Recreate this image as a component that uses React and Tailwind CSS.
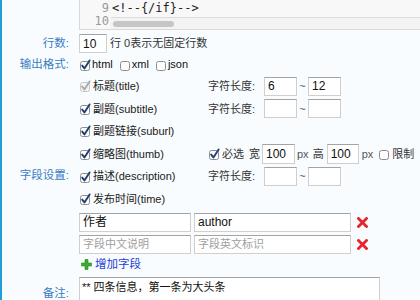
import React from 'react';

const FONT = { fontFamily: '"Liberation Sans", "Noto Sans CJK SC", sans-serif' };

function Cb({ checked = false, disabled = false }) {
  return (
    <svg width="12" height="12" viewBox="0 0 12 12" className="shrink-0">
      <rect x="1.5" y="2.5" width="9" height="9" rx="2" fill={disabled ? '#f4f4f4' : '#fdfdfd'} stroke={disabled ? '#c6c6c6' : '#8d8d8d'} />
      {checked && (
        <path
          d="M3.2 6.6 L5.4 9.4 L10.6 1.4"
          fill="none"
          stroke={disabled ? '#a9a9a9' : '#1f3f73'}
          strokeWidth="1.9"
          strokeLinecap="round"
          strokeLinejoin="round"
        />
      )}
    </svg>
  );
}

function Input({ w, value, placeholder, h = 'h-[19px]' }) {
  return (
    <div
      className={`${h} shrink-0 border border-[#cfcfcf] border-t-[#a3a3a3] bg-white px-[3px] flex items-center text-[12px] text-[#111] overflow-hidden whitespace-nowrap`}
      style={{ width: w }}
    >
      {value ? value : <span className="text-[11px] text-[#a0a0a0]">{placeholder}</span>}
    </div>
  );
}

function Del() {
  return (
    <svg width="11" height="11" viewBox="0 0 11 11" className="shrink-0">
      <path d="M1.5 1.5 L9.5 9.5 M9.5 1.5 L1.5 9.5" stroke="#e8232b" strokeWidth="2.8" strokeLinecap="square" />
    </svg>
  );
}

function Plus() {
  return (
    <svg width="11" height="11" viewBox="0 0 11 11" className="shrink-0">
      <path d="M4 0.5 H7 V4 H10.5 V7 H7 V10.5 H4 V7 H0.5 V4 H4 Z" fill="#3caa2e" stroke="#2a8a20" strokeWidth="0.6" />
    </svg>
  );
}

function Label({ children }) {
  return <div className="text-right pr-[10px] text-[11.5px] text-[#3a7dc4]">{children}</div>;
}

function Len({ vals }) {
  return (
    <div className="flex items-center">
      <span className="w-[56px] text-[11px] text-[#333]">字符长度:</span>
      <Input w={33} value={vals[0]} />
      <span className="w-[11px] text-center text-[11px] text-[#555]">~</span>
      <Input w={33} value={vals[1]} />
    </div>
  );
}

const FIELDS = [
  { cn: '标题', en: '(title)', disabled: true, len: ['6', '12'] },
  { cn: '副题', en: '(subtitle)', len: ['', ''] },
  { cn: '副题链接', en: '(suburl)' },
  { cn: '缩略图', en: '(thumb)', thumb: true },
  { cn: '描述', en: '(description)', len: ['', ''] },
  { cn: '发布时间', en: '(time)' },
];

export default function App() {
  return (
    <div className="min-h-[300px] border-l-[2px] border-[#1f9fd5] bg-[#f8fcfe] text-[#222]" style={FONT}>
      <div className="grid grid-cols-[77px_1fr]">
        <div />
        <div className="flex h-[30px] border-l border-b border-[#d9d9d9] bg-[#f8f8f8] overflow-hidden" style={{ fontFamily: '"DejaVu Sans Mono", monospace' }}>
          <div className="w-[31px] shrink-0 pt-[2px] pr-[2px] text-right text-[12px] leading-[13px] text-[#9a9a9a]">
            <div>9</div>
            <div>10</div>
          </div>
          <div className="flex-1 pt-[2px] flex flex-col">
            <div className="text-[12px] leading-[13px] text-[#222] pl-[1px]">{'<!--{/if}-->'}</div>
            <div className="mt-[2px] h-[12px] border-t border-[#dcdcdc] bg-[#f3f3f3] flex items-center">
              <div className="ml-[2px] h-[6px] w-[61px] rounded-full bg-[#c6c6c6]" />
            </div>
          </div>
        </div>
      </div>

      <div className="grid grid-cols-[77px_1fr] items-center mt-[4px] h-[19px]">
        <Label>行数:</Label>
        <div className="flex items-center">
          <Input w={28} value="10" />
          <span className="ml-[3px] text-[11px] text-[#333]">行 0表示无固定行数</span>
        </div>
      </div>

      <div className="grid grid-cols-[77px_1fr] items-center h-[21px] mt-[1px]">
        <Label>输出格式:</Label>
        <div className="flex items-center text-[11px] text-[#111]">
          <Cb checked />
          <span className="ml-[1px] mr-[6px]">html</span>
          <Cb />
          <span className="ml-[1px] mr-[6px]">xml</span>
          <Cb />
          <span className="ml-[1px]">json</span>
        </div>
      </div>

      <div className="grid grid-cols-[77px_1fr] items-center">
        <Label>字段设置:</Label>
        <div className="flex flex-col">
          {FIELDS.map((f) => (
            <div key={f.cn} className="flex items-center h-[22.6px]">
              <div className="w-[129px] flex items-center">
                <Cb checked disabled={f.disabled} />
                <span className="ml-[2px] text-[11px] text-[#222]">
                  {f.cn}
                  {f.en}
                </span>
              </div>
              {f.len && <Len vals={f.len} />}
              {f.thumb && (
                <div className="flex items-center text-[11px] text-[#333]">
                  <Cb checked />
                  <span className="ml-[2px] mr-[5px]">必选</span>
                  <span className="mr-[2px]">宽</span>
                  <Input w={33} value="100" h="h-[20px]" />
                  <span className="ml-[2px] mr-[4px] text-[#555]">px</span>
                  <span className="mr-[3px]">高</span>
                  <Input w={32} value="100" h="h-[20px]" />
                  <span className="ml-[3px] mr-[5px] text-[#555]">px</span>
                  <Cb />
                  <span className="ml-[2px]">限制</span>
                </div>
              )}
            </div>
          ))}
          <div className="flex flex-col gap-[3px] mt-[2px]">
            <div className="flex items-center">
              <Input w={112} value="作者" />
              <span className="w-[3px]" />
              <Input w={157} value="author" />
              <span className="ml-[6px]"><Del /></span>
            </div>
            <div className="flex items-center">
              <Input w={112} placeholder="字段中文说明" />
              <span className="w-[3px]" />
              <Input w={157} placeholder="字段英文标识" />
              <span className="ml-[6px]"><Del /></span>
            </div>
          </div>
          <div className="flex items-center h-[22px]">
            <span className="ml-[2px]"><Plus /></span>
            <span className="ml-[3px] text-[11.5px] text-[#2340d8]">增加字段</span>
          </div>
        </div>
      </div>

      <div className="grid grid-cols-[77px_1fr] mt-[1px]">
        <Label><div className="mt-[8px]">备注:</div></Label>
        <div className="w-[301px] h-[40px] border border-[#cfcfcf] border-t-[#a3a3a3] bg-white px-[2px] pt-[1px] text-[11px] text-[#111]">
          ** 四条信息，第一条为大头条
        </div>
      </div>
    </div>
  );
}
